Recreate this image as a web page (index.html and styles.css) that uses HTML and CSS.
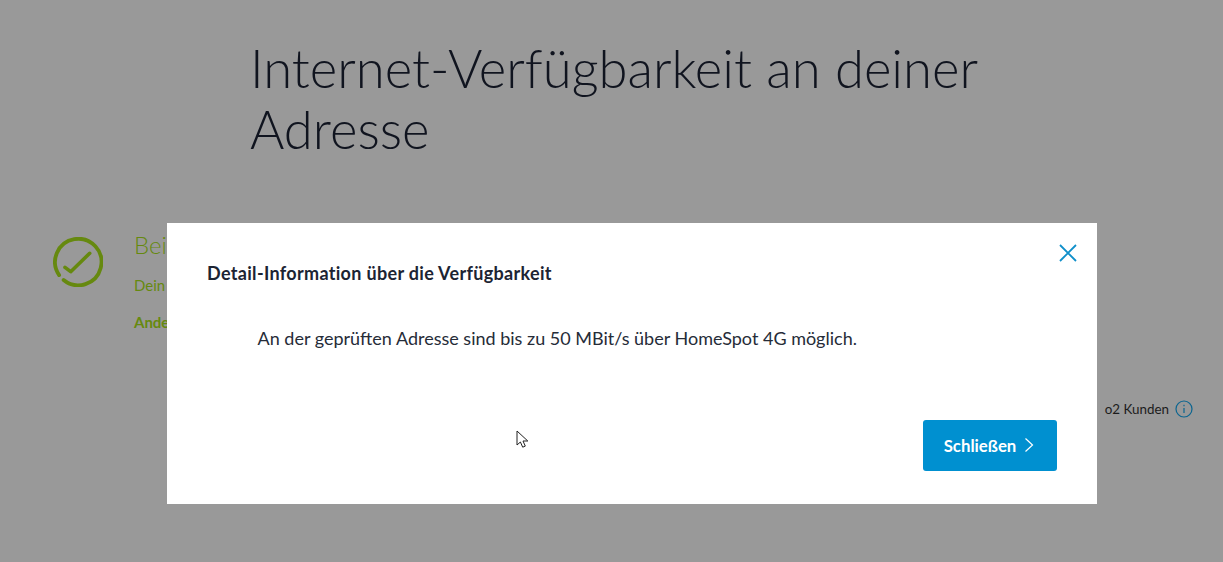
FILE: index.html
```html
<!DOCTYPE html>
<html lang="de">
<head>
<meta charset="utf-8">
<title>Internet-Verfügbarkeit</title>
<link rel="stylesheet" href="styles.css">
</head>
<body>
<main class="page">
  <h1 class="title">Internet-Verfügbarkeit an deiner Adresse</h1>
  <section class="status">
    <svg class="status-icon" viewBox="0 0 50 50" width="50" height="50" aria-hidden="true">
      <path d="M6.1 38.1A23.2 23.2 0 1 1 10.6 43" fill="none" stroke="#66890f" stroke-width="3.8" stroke-linecap="round"/>
      <path d="M12 30.3L17.7 34.7L36.7 16.3" fill="none" stroke="#66890f" stroke-width="3.6" stroke-linecap="round" stroke-linejoin="round"/>
    </svg>
    <div class="status-text">
      <div class="status-head">Bei</div>
      <div class="status-sub">Dein</div>
      <div class="status-link">Ande</div>
    </div>
  </section>
  <div class="customers">
    <span>o2 Kunden</span>
    <svg viewBox="0 0 18 18" width="18" height="18" aria-hidden="true">
      <circle cx="9" cy="9" r="8" fill="none" stroke="#0b6590" stroke-width="1.2"/>
      <path d="M9 8v5M9 4.8v1.4" stroke="#0b6590" stroke-width="1.2" fill="none"/>
    </svg>
  </div>
</main>

<div class="modal" role="dialog">
  <button class="close" aria-label="Schließen">
    <svg viewBox="0 0 18 18" width="18" height="18" aria-hidden="true">
      <path d="M1 1l16 16M17 1L1 17" stroke="#0f8fca" stroke-width="1.8" fill="none"/>
    </svg>
  </button>
  <h2 class="modal-title">Detail-Information über die Verfügbarkeit</h2>
  <p class="modal-body">An der geprüften Adresse sind bis zu 50 MBit/s über HomeSpot 4G möglich.</p>
  <div class="modal-actions">
    <button class="primary">Schließen
      <svg viewBox="0 0 10 16" width="10" height="16" aria-hidden="true">
        <path d="M1.5 1.5L8.5 8l-7 6.5" stroke="#fff" stroke-width="1.2" fill="none"/>
      </svg>
    </button>
  </div>
</div>

<svg class="cursor" viewBox="0 0 14 20" width="14" height="20" aria-hidden="true">
  <path d="M1 1v14l3.4-3 2.3 5.2 2.6-1.1L7 11h4.8z" fill="#fff" stroke="#222" stroke-width="1"/>
</svg>
</body>
</html>
```

FILE: styles.css
```css
html, body {
  margin: 0;
  height: 100%;
}
body {
  background: #999999;
  font-family: "Lato", "Liberation Sans", sans-serif;
  overflow: hidden;
  position: relative;
}
.page {
  display: flex;
  flex-direction: column;
  height: 562px;
  box-sizing: border-box;
}
.title {
  margin: 37px 0 0 250px;
  width: 790px;
  font-size: 52.6px;
  font-weight: 300;
  line-height: 61px;
  color: #10141f;
}
.status {
  display: flex;
  gap: 31px;
  margin: 69px 0 0 53px;
  color: #66890f;
}
.status-icon {
  margin-top: 9px;
  flex: none;
}
.status-text {
  display: flex;
  flex-direction: column;
  width: 33px;
  white-space: nowrap;
}
.status-head {
  font-size: 24px;
  font-weight: 300;
  line-height: 30px;
  margin-top: 2px;
}
.status-sub {
  font-size: 15px;
  line-height: 20px;
  margin-top: 15px;
}
.status-link {
  font-size: 15px;
  line-height: 20px;
  font-weight: 700;
  margin-top: 17px;
}
.customers {
  display: flex;
  align-items: center;
  justify-content: flex-end;
  gap: 6px;
  margin: 68px 30px 0 0;
  font-size: 13.4px;
  color: #1c1c1c;
}
.modal {
  position: absolute;
  left: 167px;
  top: 223px;
  width: 930px;
  height: 281px;
  box-sizing: border-box;
  background: #fff;
  padding: 40px 40px 33px;
  display: flex;
  flex-direction: column;
}
.close {
  position: absolute;
  top: 21px;
  right: 20px;
  padding: 0;
  border: 0;
  background: none;
  display: flex;
}
.modal-title {
  margin: 0;
  font-size: 18px;
  letter-spacing: 0.32px;
  line-height: 20px;
  font-weight: 700;
  color: #1c2433;
}
.modal-body {
  margin: 44px 0 0 50.5px;
  font-size: 18px;
  line-height: 22px;
  color: #262c38;
}
.modal-actions {
  margin-top: auto;
  display: flex;
  justify-content: flex-end;
}
.primary {
  display: flex;
  align-items: center;
  gap: 8px;
  width: 134px;
  height: 51px;
  padding: 0 2px 1px 0;
  justify-content: center;
  border: 0;
  border-radius: 3px;
  background: #0090d0;
  color: #fff;
  font-family: inherit;
  font-size: 16.8px;
  font-weight: 700;
}
.cursor {
  position: absolute;
  left: 516px;
  top: 430px;
}
```
